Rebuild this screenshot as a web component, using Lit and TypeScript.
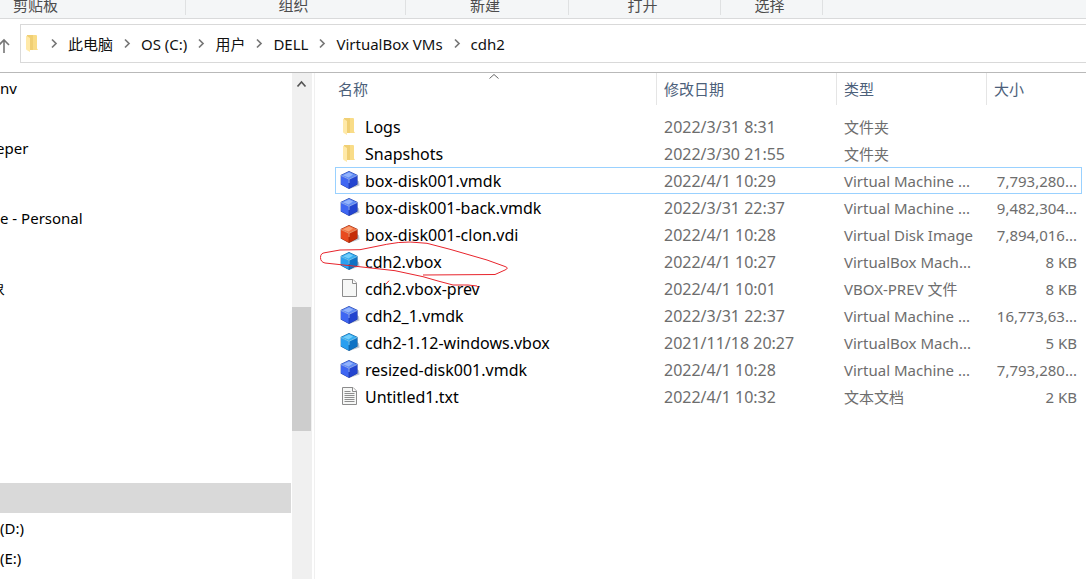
import { LitElement, html, svg, css } from "lit";
import { customElement } from "lit/decorators.js";
import { classMap } from "lit/directives/class-map.js";

type Kind = "folder" | "blue" | "red" | "sky" | "blank" | "text";

interface Entry {
  name: string;
  date: string;
  type: string;
  size: string;
  kind: Kind;
  focused?: boolean;
}

const VM = "Virtual Machine ...";
const VB = "VirtualBox Mach...";

const ENTRIES: Entry[] = [
  { name: "Logs", date: "2022/3/31 8:31", type: "文件夹", size: "", kind: "folder" },
  { name: "Snapshots", date: "2022/3/30 21:55", type: "文件夹", size: "", kind: "folder" },
  { name: "box-disk001.vmdk", date: "2022/4/1 10:29", type: VM, size: "7,793,280...", kind: "blue", focused: true },
  { name: "box-disk001-back.vmdk", date: "2022/3/31 22:37", type: VM, size: "9,482,304...", kind: "blue" },
  { name: "box-disk001-clon.vdi", date: "2022/4/1 10:28", type: "Virtual Disk Image", size: "7,894,016...", kind: "red" },
  { name: "cdh2.vbox", date: "2022/4/1 10:27", type: VB, size: "8 KB", kind: "sky" },
  { name: "cdh2.vbox-prev", date: "2022/4/1 10:01", type: "VBOX-PREV 文件", size: "8 KB", kind: "blank" },
  { name: "cdh2_1.vmdk", date: "2022/3/31 22:37", type: VM, size: "16,773,63...", kind: "blue" },
  { name: "cdh2-1.12-windows.vbox", date: "2021/11/18 20:27", type: VB, size: "5 KB", kind: "sky" },
  { name: "resized-disk001.vmdk", date: "2022/4/1 10:28", type: VM, size: "7,793,280...", kind: "blue" },
  { name: "Untitled1.txt", date: "2022/4/1 10:32", type: "文本文档", size: "2 KB", kind: "text" },
];

const CRUMBS = ["此电脑", "OS (C:)", "用户", "DELL", "VirtualBox VMs", "cdh2"];

const CUBES: Record<string, string[]> = {
  blue: ["#a9c4ff", "#5f8bf6", "#3f66f2", "#2344cf", "#1a349f"],
  red: ["#ffb183", "#f27040", "#e84a1e", "#c52c08", "#8e1f06"],
  sky: ["#8fdcff", "#35aef2", "#2a9ff0", "#0f72c4", "#0b5592"],
};

const folder = () => svg`
  <path d="M4 1h9q1 0 1 1v12.500l1 1.500H7z" fill="#f9dc87"/>
  <path d="M4 1h6v15H5z" fill="#f0cf74"/>
  <path d="M3 1.500l4 2.500v14l-3.300-2q-.7-.4-.7-1.200z" fill="#ffe9a8"/>`;

const cube = (kind: Kind) => {
  const [light, top, left, right, edge] = CUBES[kind];
  return svg`
    <path d="M9 18l10.500-3.500-.5-4-4-3z" fill="#203a66" opacity=".3"/>
    <path d="M9 0L17.500 4v9.500L9 18 .7 13.500V4z" fill="${edge}"/>
    <path d="M9 .5L17 4.200 9 8 1 4.200z" fill="${top}"/>
    <path d="M9 1.500L13 3.500 8.500 6.500 3 4.200z" fill="${light}" opacity=".7"/>
    <path d="M1 4.700L8.700 8.500v9L1 13.300z" fill="${left}"/>
    <path d="M17.200 4.700L9.300 8.500v9l7.900-4.200z" fill="${right}"/>
    <path d="M1 4.500L9 8.300l8-3.800M9 8.300V12" fill="none" stroke="${light}" stroke-width=".8"/>`;
};

const sheet = (lined: boolean) => svg`
  <path d="M2.500 .5h10.500l3.500 3.500v13.500H2.500z" fill="#f6f7f6" stroke="#8c8c8c"/>
  <path d="M12.500 .5V4.500H16.500" fill="#fff" stroke="#8c8c8c"/>
  ${lined ? svg`<path d="M4.500 4.500h6M4.500 6.500h10M4.500 8.500h10M4.500 10.500h10M4.500 12.500h10M4.500 14.500h10" stroke="#8e8e8e"/>` : null}`;

const fileIcon = (kind: Kind) => html`<svg class="icon" viewBox="0 0 20 20" aria-hidden="true">
  ${kind === "folder" ? folder() : kind === "blank" || kind === "text" ? sheet(kind === "text") : cube(kind)}
</svg>`;

const FONT = css`
  :host {
    font: 15px/20px "Noto Sans", "Noto Sans CJK SC", sans-serif;
  }
  button {
    font: inherit;
    color: inherit;
    background: none;
    border: 0;
    padding: 0;
    text-align: left;
    white-space: nowrap;
  }
`;

@customElement("ribbon-labels")
class RibbonLabels extends LitElement {
  static styles = [FONT, css`
    :host { display: flex; height: 18px; background: #f4f6f7; border-bottom: 1px solid #d9dadb; color: #4c4c4c; line-height: 10px; }
    .group { flex: none; box-sizing: border-box; height: 15px; border-right: 1px solid #dfe1e2; padding-right: 4px; text-align: center; }
    .clip { width: 186px; text-align: left; padding-left: 13px; }
    .organize { width: 220px; }
    .create { width: 163px; }
    .open { width: 152px; }
    .select { width: 102px; }
  `];
  render() {
    return html`
      <div class="group clip">剪贴板</div>
      <div class="group organize">组织</div>
      <div class="group create">新建</div>
      <div class="group open">打开</div>
      <div class="group select">选择</div>`;
  }
}

@customElement("address-bar")
class AddressBar extends LitElement {
  static styles = [FONT, css`
    :host { display: flex; align-items: center; height: 54px; border-bottom: 1px solid #b9b9b9; box-sizing: border-box; padding-bottom: 9px; padding-top: 5px; }
    .up { width: 20px; height: 20px; flex: none; }
    .arrow { display: block; width: 20px; height: 20px; }
    .path { flex: 1; display: flex; align-items: center; box-sizing: border-box; height: 39px; border: 1px solid #d9d9d9; border-right: 0; padding-left: 2px; color: #111; }
    .icon { width: 20px; height: 20px; flex: none; margin-right: -3px; }
    .chev { width: 28px; height: 20px; flex: none; }
  `];
  render() {
    return html`
      <button class="up" aria-label="上移">
        <svg class="arrow" viewBox="0 0 20 20"><path d="M4 19V6M-1 11l5-5 5 5" fill="none" stroke="#777" stroke-width="1.600"/></svg>
      </button>
      <nav class="path" aria-label="地址">
        ${fileIcon("folder")}
        ${CRUMBS.map((c) => html`
          <svg class="chev" viewBox="0 0 28 20" aria-hidden="true"><path d="M12 5.500l4 4-4 4" fill="none" stroke="#777" stroke-width="1.700"/></svg>
          <button>${c}</button>`)}
      </nav>`;
  }
}

@customElement("nav-pane")
class NavPane extends LitElement {
  static styles = [FONT, css`
    :host { display: flex; width: 312px; flex: none; color: #000; overflow: hidden; }
    .tree { flex: 1; min-width: 0; margin: 0 1px 0 0; padding: 0; list-style: none; overflow: hidden; }
    .item { height: 30px; }
    .gap { height: 10px; }
    .link { display: block; line-height: 30px; height: 30px; color: inherit; text-decoration: none; white-space: nowrap; }
    .cut { margin-left: -4px; }
    .half { margin-left: -10px; }
    .selected { background: #d9d9d9; }
    .bar { width: 20px; flex: none; background: #f0f0f0; display: flex; flex-direction: column; }
    .step { height: 20px; width: 20px; }
    .glyph { display: block; width: 20px; height: 20px; }
    .track { flex: 1; display: grid; grid-template-rows: 214fr 124fr 148fr; }
    .thumb { grid-row: 2; background: #cdcdcd; margin-right: 1px; }
  `];
  row(label = "", cls = "") {
    return html`<li class="item">${label ? html`<a class="link ${cls}" href="#">${label}</a>` : null}</li>`;
  }
  render() {
    return html`
      <ul class="tree">
        ${this.row("nv")}${this.row()}${this.row("eper", "cut")}${this.row()}
        <li class="gap"></li>
        ${this.row("e - Personal")}${this.row()}
        <li class="gap"></li>
        ${this.row("象", "half")}
        ${Array.from({ length: 6 }, () => this.row())}
        <li class="item selected"></li>
        ${this.row("(D:)")}${this.row("(E:)")}
      </ul>
      <div class="bar">
        <button class="step" aria-label="向上滚动">
          <svg class="glyph" viewBox="0 0 20 20"><path d="M5.500 13.500l4-4.500 4 4.500" fill="none" stroke="#555" stroke-width="1.700"/></svg>
        </button>
        <div class="track"><div class="thumb"></div></div>
      </div>`;
  }
}

@customElement("file-list")
class FileList extends LitElement {
  static styles = [FONT, css`
    :host { display: block; flex: 1; min-width: 0; position: relative; margin-left: 2px; border-left: 1px solid #f0f0f0; padding: 0 4px 0 20px; }
    .files { width: 100%; table-layout: fixed; border-collapse: separate; border-spacing: 0; color: #6d6d6d; }
    .date { width: 180px; }
    .type { width: 150px; }
    .size { width: 96px; }
    th { height: 32px; padding: 0 0 0 7px; font-weight: 400; text-align: left; color: #4c607a; border-left: 1px solid #e5e5e5; box-sizing: border-box; position: relative; }
    th.name { border-left: 0; padding-left: 3px; }
    .sort { position: absolute; top: 0; left: 50%; margin-left: -8px; width: 12px; height: 7px; }
    .space td { height: 8px; padding: 0; }
    td { height: 27px; box-sizing: border-box; padding: 0 0 0 8px; white-space: nowrap; overflow: hidden; border: solid transparent; border-width: 1px 0; }
    td.file { padding-left: 4px; border-left-width: 1px; color: #000; font-size: 16px; }
    td.when { font-size: 16px; }
    td.amount { padding: 0 4px 0 0; text-align: right; border-right-width: 1px; }
    .focused td { border-color: #99d1ff; }
    .cell { display: flex; align-items: center; gap: 5px; }
    .icon { width: 20px; height: 20px; flex: none; }
    .ink { position: absolute; left: 0; top: 164px; width: 200px; height: 56px; pointer-events: none; }
  `];
  render() {
    return html`
      <table class="files">
        <colgroup><col /><col class="date" /><col class="type" /><col class="size" /></colgroup>
        <thead>
          <tr>
            <th class="name" aria-sort="ascending">
              <svg class="sort" viewBox="0 0 12 7" aria-hidden="true"><path d="M1.500 5.500L6 1.500l4.500 4" fill="none" stroke="#666"/></svg>
              <button>名称</button>
            </th>
            <th><button>修改日期</button></th>
            <th><button>类型</button></th>
            <th><button>大小</button></th>
          </tr>
        </thead>
        <tbody>
          <tr class="space"><td colspan="4"></td></tr>
          ${ENTRIES.map((e) => html`
            <tr class=${classMap({ focused: !!e.focused })}>
              <td class="file"><div class="cell">${fileIcon(e.kind)}<span>${e.name}</span></div></td>
              <td class="when">${e.date}</td>
              <td>${e.type}</td>
              <td class="amount">${e.size}</td>
            </tr>`)}
        </tbody>
      </table>
      <svg class="ink" viewBox="315 237 200 56" aria-hidden="true">
        <path d="M478.300 287.500L477 286 468 285H453L438 281 423 276.700 395 270.700 353 266 325 263Q320.500 262 320.500 257.500T325 252.700L340 250 360 249.700 386.700 244.300Q398 242 410 242L427 243.300 450 249.300 487 260 505 266.500Q509.500 268 505 270L495 274.500 423 275M389 280.700L386 284" fill="none" stroke="#e8242c" stroke-width="1"/>
      </svg>`;
  }
}

@customElement("app-root")
class AppRoot extends LitElement {
  static styles = css`
    :host { display: flex; flex-direction: column; min-height: 100vh; background: #fff; }
    .body { flex: 1; display: flex; }
  `;
  render() {
    return html`
      <ribbon-labels></ribbon-labels>
      <address-bar></address-bar>
      <div class="body">
        <nav-pane></nav-pane>
        <file-list></file-list>
      </div>`;
  }
}
